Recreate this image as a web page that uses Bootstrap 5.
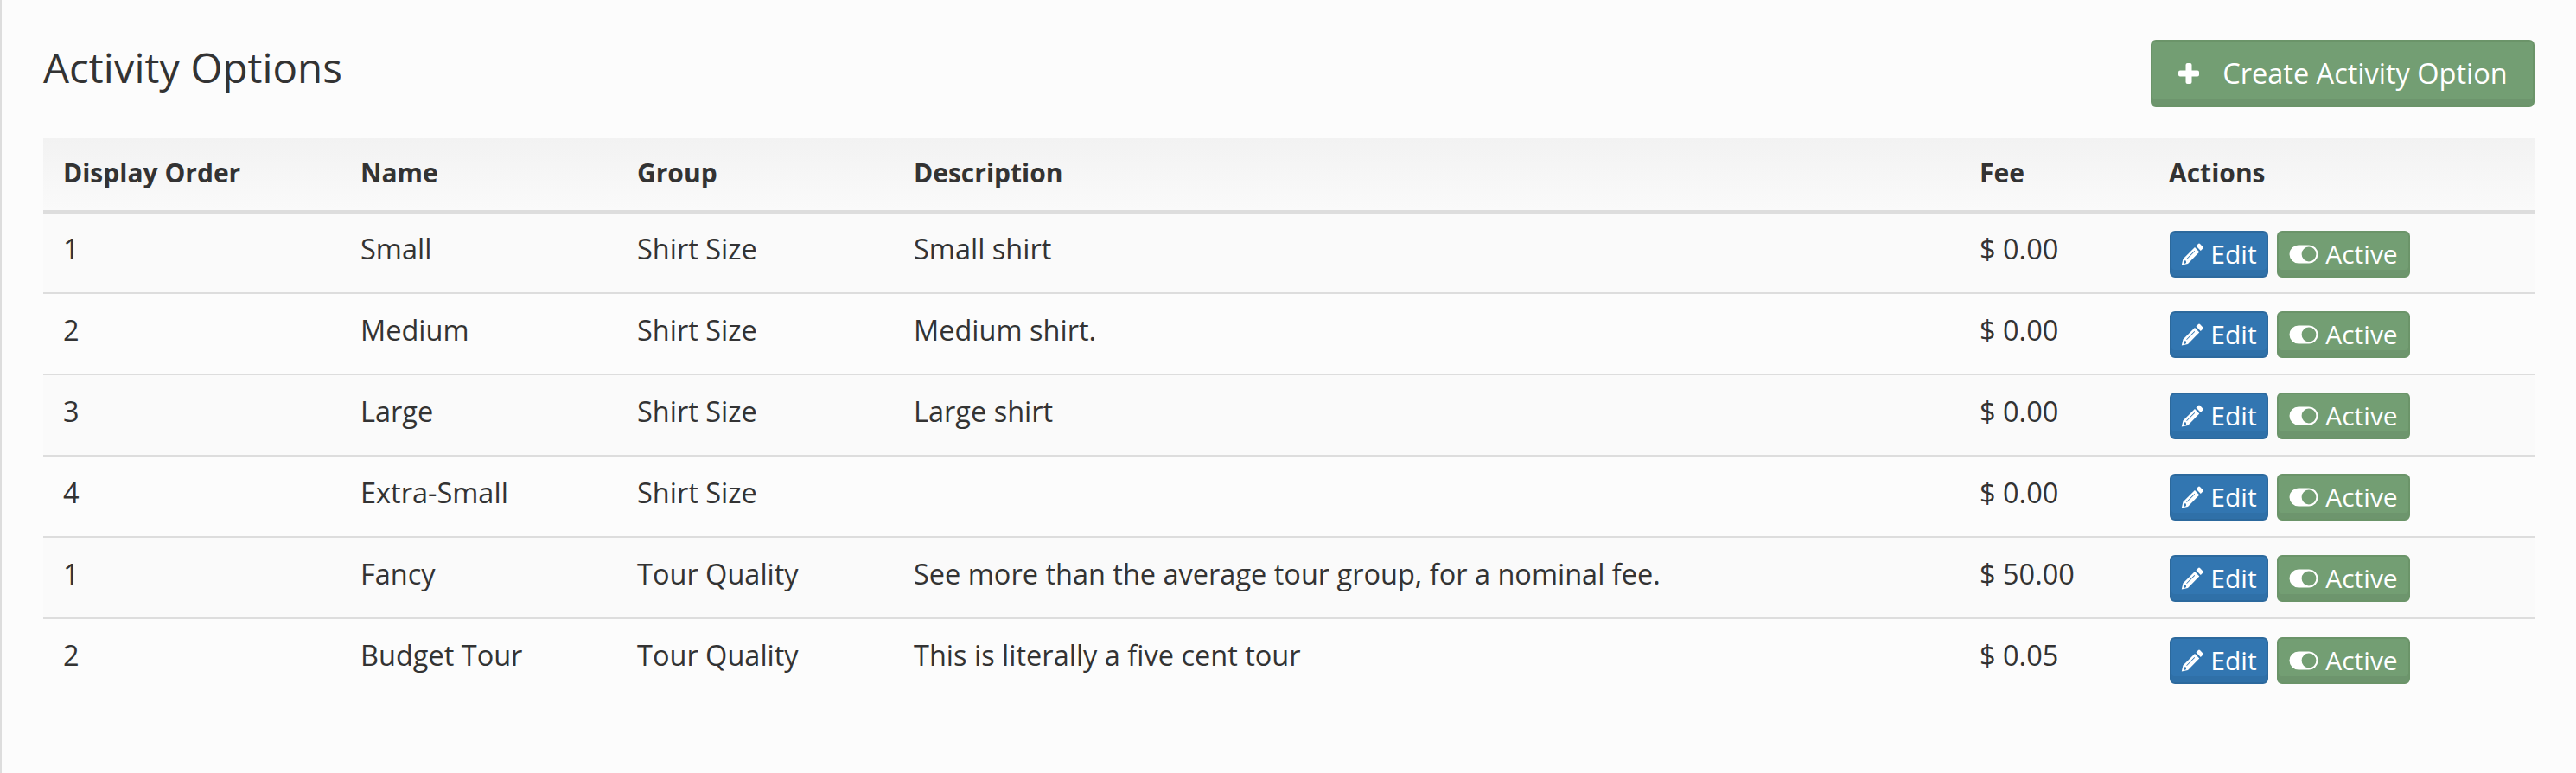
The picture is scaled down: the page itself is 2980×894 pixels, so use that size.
<!DOCTYPE html>
<html lang="en">
<head>
<meta charset="utf-8">
<title>Activity Options</title>
<link href="https://cdn.jsdelivr.net/npm/bootstrap@5.3.0/dist/css/bootstrap.min.css" rel="stylesheet">
<style>
html,body{height:100%}
body{background:#fcfcfc;color:#333;font-family:"Open Sans",sans-serif;font-size:32.5px;line-height:1.43;border-left:2px solid #ddd}
.page-wrap{padding:46px 48px 0 48px}
.page-title{font-size:47.5px;font-weight:400;line-height:1.1;margin:6px 0 0;color:#333}
.head-row{height:114px}
.btn-make,.btn-act{color:#fff;border-width:2px;border-style:solid;border-radius:6px;line-height:1;display:inline-flex;align-items:center;justify-content:center;white-space:nowrap}
.btn-make{width:444px;height:78px;font-size:32.5px;background:#739e73;border-color:#6b9469;box-shadow:inset 0 -7px 0 rgba(0,0,0,.05);gap:26px;padding:0}
.btn-act{height:54px;font-size:30px;padding:0;box-shadow:inset 0 -7px 0 rgba(0,0,0,.05);gap:8px}
.btn-make:hover,.btn-act:hover{color:#fff}
.btn-edit{width:114px;background:#3276b1;border-color:#2c699d}
.btn-state{width:154px;background:#739e73;border-color:#6b9469;margin-left:10px}
.opts-table{table-layout:fixed;width:2882px;margin:0;color:#333;--bs-table-bg:transparent;--bs-table-color:#333;border-color:#ddd}
.opts-table th{background:linear-gradient(#f2f2f2,#fafafa);font-size:30px;font-weight:700;height:85px;padding:0 23px 2px;vertical-align:middle;border-bottom:4px solid #ddd}
.opts-table td{height:94px;padding:0 23px 8px;vertical-align:middle;border-bottom:2px solid #ddd;font-size:32.5px;box-shadow:none}
.opts-table tbody tr:nth-child(odd) td{background:#fafafa}
.opts-table tr:last-child td{border-bottom:0}
.opts-table .cell-act{padding:2px 0 0 24px}
.c1{width:344px}.c2{width:320px}.c3{width:320px}.c4{width:1233px}.c5{width:219px}.c6{width:446px}
.ico-plus{width:26px;height:26px;fill:#fff}
.ico-pen{width:26px;height:26px;fill:#fff}
.ico-tog{width:34px;height:22px;fill:#fff}
.sym-defs{width:0;height:0;overflow:hidden}
</style>
</head>
<body>
<svg class="sym-defs position-absolute" aria-hidden="true">
  <symbol id="i-pen" viewBox="0 0 26 26"><path fill-rule="evenodd" d="M17.500 3.600 20 1.100q1-1 2 0l3.300 3.300q1 1 0 2L22.800 8.900zM16 5.100 21.300 10.400 8 24 .8 25.600 2.400 18.500zM3.700 20.300 5.800 20.500 6 22.700 4.800 24 2.900 22.400zM6.200 18.400 15.500 9.100l.6.600L6.800 19z"/></symbol>
  <symbol id="i-tog" viewBox="0 0 34 22"><path fill-rule="evenodd" d="M11 .5h12a10.500 10.500 0 0 1 0 21H11a10.500 10.500 0 0 1 0-21zm12 2.100a8.400 8.400 0 1 0 0 16.800 8.400 8.400 0 0 0 0-16.800z"/></symbol>
</svg>
<div class="page-wrap">
  <div class="d-flex justify-content-between align-items-start head-row">
    <h1 class="page-title">Activity Options</h1>
    <a href="#" class="btn btn-make">
      <svg class="ico-plus" viewBox="0 0 26 26"><path d="M9.500 3a2 2 0 0 1 2-2h3a2 2 0 0 1 2 2v6.500H23a2 2 0 0 1 2 2v3a2 2 0 0 1-2 2h-6.500V23a2 2 0 0 1-2 2h-3a2 2 0 0 1-2-2v-6.500H3a2 2 0 0 1-2-2v-3a2 2 0 0 1 2-2h6.500z"/></svg>
      <span>Create Activity Option</span>
    </a>
  </div>
  <table class="table opts-table">
    <colgroup><col class="c1"><col class="c2"><col class="c3"><col class="c4"><col class="c5"><col class="c6"></colgroup>
    <thead><tr><th>Display Order</th><th>Name</th><th>Group</th><th>Description</th><th>Fee</th><th>Actions</th></tr></thead>
    <tbody>
      <tr><td>1</td><td>Small</td><td>Shirt Size</td><td>Small shirt</td><td>$ 0.00</td><td class="cell-act"><a href="#" class="btn btn-act btn-edit"><svg class="ico-pen"><use href="#i-pen"/></svg>Edit</a><a href="#" class="btn btn-act btn-state"><svg class="ico-tog"><use href="#i-tog"/></svg>Active</a></td></tr>
      <tr><td>2</td><td>Medium</td><td>Shirt Size</td><td>Medium shirt.</td><td>$ 0.00</td><td class="cell-act"><a href="#" class="btn btn-act btn-edit"><svg class="ico-pen"><use href="#i-pen"/></svg>Edit</a><a href="#" class="btn btn-act btn-state"><svg class="ico-tog"><use href="#i-tog"/></svg>Active</a></td></tr>
      <tr><td>3</td><td>Large</td><td>Shirt Size</td><td>Large shirt</td><td>$ 0.00</td><td class="cell-act"><a href="#" class="btn btn-act btn-edit"><svg class="ico-pen"><use href="#i-pen"/></svg>Edit</a><a href="#" class="btn btn-act btn-state"><svg class="ico-tog"><use href="#i-tog"/></svg>Active</a></td></tr>
      <tr><td>4</td><td>Extra-Small</td><td>Shirt Size</td><td></td><td>$ 0.00</td><td class="cell-act"><a href="#" class="btn btn-act btn-edit"><svg class="ico-pen"><use href="#i-pen"/></svg>Edit</a><a href="#" class="btn btn-act btn-state"><svg class="ico-tog"><use href="#i-tog"/></svg>Active</a></td></tr>
      <tr><td>1</td><td>Fancy</td><td>Tour Quality</td><td>See more than the average tour group, for a nominal fee.</td><td>$ 50.00</td><td class="cell-act"><a href="#" class="btn btn-act btn-edit"><svg class="ico-pen"><use href="#i-pen"/></svg>Edit</a><a href="#" class="btn btn-act btn-state"><svg class="ico-tog"><use href="#i-tog"/></svg>Active</a></td></tr>
      <tr><td>2</td><td>Budget Tour</td><td>Tour Quality</td><td>This is literally a five cent tour</td><td>$ 0.05</td><td class="cell-act"><a href="#" class="btn btn-act btn-edit"><svg class="ico-pen"><use href="#i-pen"/></svg>Edit</a><a href="#" class="btn btn-act btn-state"><svg class="ico-tog"><use href="#i-tog"/></svg>Active</a></td></tr>
    </tbody>
  </table>
</div>
<script src="https://cdn.jsdelivr.net/npm/bootstrap@5.3.0/dist/js/bootstrap.bundle.min.js"></script>
</body>
</html>
